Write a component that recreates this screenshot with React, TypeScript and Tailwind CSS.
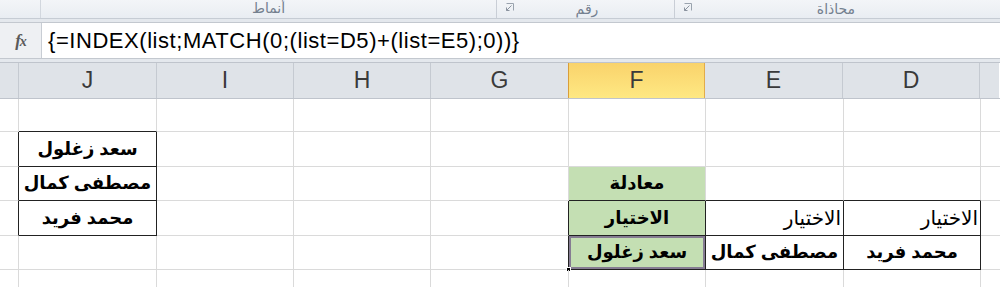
import React from "react";

const AR = "font-['Liberation_Sans','DejaVu_Sans',sans-serif]";

const Launcher = () => (
  <svg width="9" height="9" viewBox="0 0 9 9" className="shrink-0">
    <path d="M1.5 0.5H8.5V7.5" fill="none" stroke="#9aa3ae" strokeWidth="1" />
    <path d="M6.5 2.5L1.5 7.5M1.5 4.5V7.5H4.5" fill="none" stroke="#8a939f" strokeWidth="1" />
  </svg>
);

const cols = ["", "J", "I", "H", "G", "F", "E", "D", ""];
const colW = ["w-[19px]", "w-[138px]", "w-[137px]", "w-[137px]", "w-[138px]", "w-[137px]", "w-[138px]", "w-[137px]", "w-[19px]"];
const rowH = ["h-[33px]", "h-[35px]", "h-[34px]", "h-[35px]", "h-[34px]", "h-[19px]"];

type Cell = { text?: string; bold?: boolean; align?: "center" | "right"; bg?: string; br?: boolean; bb?: boolean; sel?: boolean };

// rows 1..6, cols 0..8 ; br/bb = dark right/bottom border
const cells: Record<string, Cell> = {
  "0-1": { bb: true },
  "1-0": { br: true },
  "1-1": { text: "سعد زغلول", bold: true, br: true, bb: true },
  "2-0": { br: true },
  "2-1": { text: "مصطفى كمال", bold: true, br: true, bb: true },
  "3-0": { br: true },
  "3-1": { text: "محمد فريد", bold: true, br: true, bb: true },
  "2-5": { text: "معادلة", bold: true, bg: "bg-[#c4dfb3]", bb: true },
  "2-6": { bb: true },
  "2-7": { bb: true },
  "3-4": { br: true },
  "3-5": { text: "الاختيار", bold: true, bg: "bg-[#c4dfb3]", br: true, bb: true },
  "3-6": { text: "الاختيار", align: "right", br: true, bb: true },
  "3-7": { text: "الاختيار", align: "right", br: true, bb: true },
  "4-4": { br: true },
  "4-5": { text: "سعد زغلول", bold: true, bg: "bg-[#c4dfb3]", br: true, bb: true, sel: true },
  "4-6": { text: "مصطفى كمال", bold: true, br: true, bb: true },
  "4-7": { text: "محمد فريد", bold: true, br: true, bb: true },
};

export default function App() {
  return (
    <div className="w-[1000px] h-[287px] overflow-hidden bg-white">
      {/* ribbon group labels */}
      <div className="flex h-[19px] bg-gradient-to-b from-[#f3f5f8] to-[#e9edf2] border-b border-[#c6ccd4] text-[14px] text-[#74808f] font-['Liberation_Sans','DejaVu_Sans',sans-serif]">
        <div className="w-[41px] border-r border-[#d2d7de]" />
        <div className="w-[456px] border-r border-[#c9ced6] flex items-center justify-center pb-[2px]">أنماط</div>
        <div className="w-[178px] border-r border-[#c9ced6] flex items-start pt-[3px] pl-[8px]">
          <Launcher />
          <span className="flex-1 text-center pr-[14px] -mt-[4px]">رقم</span>
        </div>
        <div className="flex-1 flex items-start pt-[3px] pl-[8px]">
          <Launcher />
          <span className="flex-1 text-center pr-[20px] -mt-[4px]">محاذاة</span>
        </div>
      </div>
      <div className="h-[3px] bg-[#e4e8ed]" />
      {/* formula bar */}
      <div className="flex h-[37px] border-y border-[#c3c8cf]">
        <div className="w-[42px] bg-[#eef0f3] border-r border-[#c8cdd4] flex items-center justify-center">
          <span className="font-['Liberation_Serif',serif] italic font-bold text-[17px] text-[#5a5a5a] tracking-[-1px]">f<span className="text-[14px]">x</span></span>
        </div>
        <div className="flex-1 flex items-center pl-[6px] text-[22px] text-black font-['Liberation_Sans',sans-serif] tracking-[0.55px] whitespace-nowrap">
          {"{=INDEX(list;MATCH(0;(list=D5)+(list=E5);0))}"}
        </div>
      </div>
      <div className="h-[3px] bg-[#e4e8ed]" />
      {/* column headers */}
      <div className="flex h-[37px] border-y border-[#bfc4cc]">
        {cols.map((c, i) => (
          <div
            key={i}
            className={`${colW[i]} shrink-0 border-r flex items-center justify-center text-[23px] text-[#3a3a3a] font-['Liberation_Sans',sans-serif] ${
              c === "F"
                ? "bg-gradient-to-b from-[#f9d36b] to-[#fee883] border-[#e2ac4a] border-l border-l-[#d99e3a] -ml-px"
                : "bg-[#dfe3e8] border-[#c5cad1]"
            } ${i === 8 ? "border-r-0" : ""}`}
          >
            {c}
          </div>
        ))}
      </div>
      {/* body */}
      <div className="flex flex-col">
        {rowH.map((h, r) => (
          <div key={r} className={`flex ${h}`}>
            {cols.map((_, c) => {
              const cell = cells[`${r}-${c}`] ?? {};
              return (
                <div
                  key={c}
                  dir="rtl"
                  className={`${colW[c]} shrink-0 relative border-r border-b flex items-center whitespace-nowrap ${AR} text-black ${
                    cell.align === "right" ? "justify-start pr-[2px]" : "justify-center"
                  } ${cell.bold ? "font-bold text-[18px]" : "font-normal text-[20px]"} ${cell.bg ?? ""} ${
                    cell.br ? "border-r-[#222]" : "border-r-[#dadada]"
                  } ${cell.bb ? "border-b-[#222]" : "border-b-[#dadada]"} ${
                    cell.sel ? "shadow-[inset_0_0_0_2px_#857c92]" : ""
                  } ${c === 8 ? "border-r-0" : ""}`}
                >
                  {cell.text}
                  {cell.sel && <div className="absolute -left-[3px] -bottom-[3px] w-[5px] h-[5px] bg-black border border-white" />}
                </div>
              );
            })}
          </div>
        ))}
      </div>
    </div>
  );
}
